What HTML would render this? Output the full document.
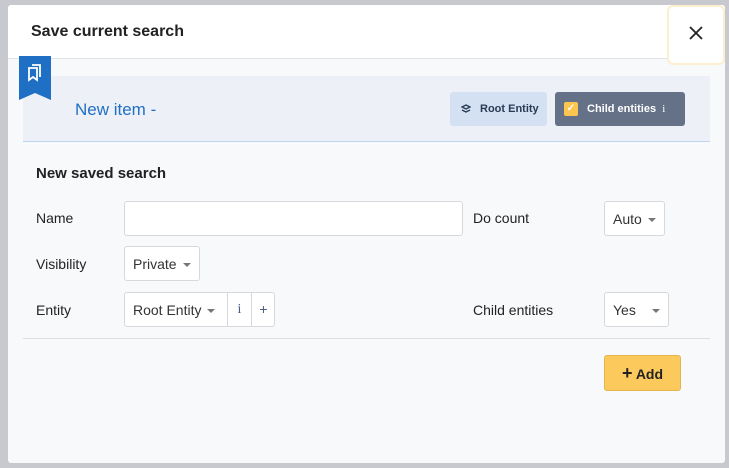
<!DOCTYPE html><html><head><style>
*{box-sizing:border-box}body{margin:0;width:729px;height:468px;background:#c8c9cf;font-family:"Liberation Sans",sans-serif;position:relative;overflow:hidden;color:#222}
.m{position:absolute;left:8px;top:5px;width:717px;height:458px;background:#f8f9fb;border-radius:3px;overflow:hidden}
.hd{height:54px;background:#fff;border-bottom:1px solid #e2e4e8;position:relative}
.hd h1{margin:0;position:absolute;left:23px;top:18px;font-size:16px;font-weight:bold;color:#222}
.x{position:absolute;right:0;top:0;width:58px;height:60px;border:2px solid #fcefd0;border-radius:6px;background:#fff}
.band{position:absolute;left:15px;top:71px;width:687px;height:66px;background:#edf1f7;border-bottom:1px solid #bcd4ee}
.bm{position:absolute;left:11px;top:51px;width:32px;height:44px;background:#1f6fc5;clip-path:polygon(0 0,100% 0,100% 100%,50% 84%,0 100%)}
.t{position:absolute;left:67px;top:95px;font-size:17px;color:#1f6fc5}
.b1{position:absolute;left:442px;top:87px;width:97px;height:34px;background:#d3e1f2;border-radius:3px;font-size:11px;font-weight:bold;color:#2b3a55;padding:11px 0 0 30px}
.b2{position:absolute;left:547px;top:87px;width:130px;height:34px;background:#647186;border-radius:3px;font-size:11px;font-weight:bold;color:#fff;padding:11px 0 0 32px}
.cb{position:absolute;left:9px;top:10px;width:14px;height:14px;background:#fcc54f;border-radius:2px;color:#fff;font-size:10px;text-align:center;line-height:14px}
.lbl{position:absolute;font-size:14px;color:#222}
.in{position:absolute;background:#fff;border:1px solid #d6d8dc;border-radius:3px;font-size:14px;color:#333;padding:0 8px;line-height:35px;white-space:nowrap}
.car{display:inline-block;border-left:4px solid transparent;border-right:4px solid transparent;border-top:4px solid #777;vertical-align:middle;margin-left:6px}
</style></head><body>
<div class="m">
<div class="hd"><h1>Save current search</h1><div class="x"><svg width="58" height="58" style="position:absolute;left:-2px;top:-2px"><path d="M23 22l12 12M35 22l-12 12" stroke="#222" stroke-width="1.8"/></svg></div></div>
<div class="band"></div>
<div class="bm"><svg width="32" height="40"><path d="M10 12h8v12l-4-3-4 3z M13 9h8v12" fill="none" stroke="#fff" stroke-width="1.8"/></svg></div>
<div class="t">New item -</div>
<div class="b1"><svg width="10" height="10" style="position:absolute;left:11px;top:12px"><path d="M5 1l4 2-4 2-4-2z M1 6l4 2 4-2" fill="none" stroke="#2b3a55" stroke-width="1.3"/></svg>Root Entity</div>
<div class="b2"><div class="cb">✓</div>Child entities &nbsp;<span style="font-weight:normal;font-family:'Liberation Serif'">i</span></div>
<div style="position:absolute;left:28px;top:160px;font-size:15px;font-weight:bold">New saved search</div>
<div class="lbl" style="left:28px;top:205px">Name</div>
<div class="in" style="left:116px;top:196px;width:339px;height:35px"></div>
<div class="lbl" style="left:465px;top:205px">Do count</div>
<div class="in" style="left:596px;top:196px;width:61px;height:35px">Auto<span class="car"></span></div>
<div class="lbl" style="left:28px;top:251px">Visibility</div>
<div class="in" style="left:116px;top:241px;width:76px;height:35px">Private<span class="car"></span></div>
<div class="lbl" style="left:28px;top:297px">Entity</div>
<div class="in" style="left:116px;top:287px;width:151px;height:35px;padding-left:8px">Root Entity<span class="car"></span>
<span style="position:absolute;left:102px;top:0;height:33px;border-left:1px solid #d6d8dc;width:24px;text-align:center;line-height:33px;color:#4a5a80;font-family:'Liberation Serif'">i</span>
<span style="position:absolute;left:126px;top:0;height:33px;border-left:1px solid #d6d8dc;width:24px;text-align:center;line-height:32px;color:#4a5a80">+</span></div>
<div class="lbl" style="left:465px;top:297px">Child entities</div>
<div class="in" style="left:596px;top:287px;width:65px;height:35px">Yes<span class="car" style="position:absolute;right:8px;top:16px;margin:0"></span></div>
<div style="position:absolute;left:15px;top:333px;width:687px;border-top:1px solid #dcdee2"></div>
<div style="position:absolute;left:596px;top:350px;width:77px;height:36px;background:#fcc95c;border:1px solid #e5b44b;border-radius:3px;font-size:14px;font-weight:bold;color:#222;text-align:center;line-height:34px"><span style="font-size:18px">+</span> Add</div>
</div>
</body></html>
